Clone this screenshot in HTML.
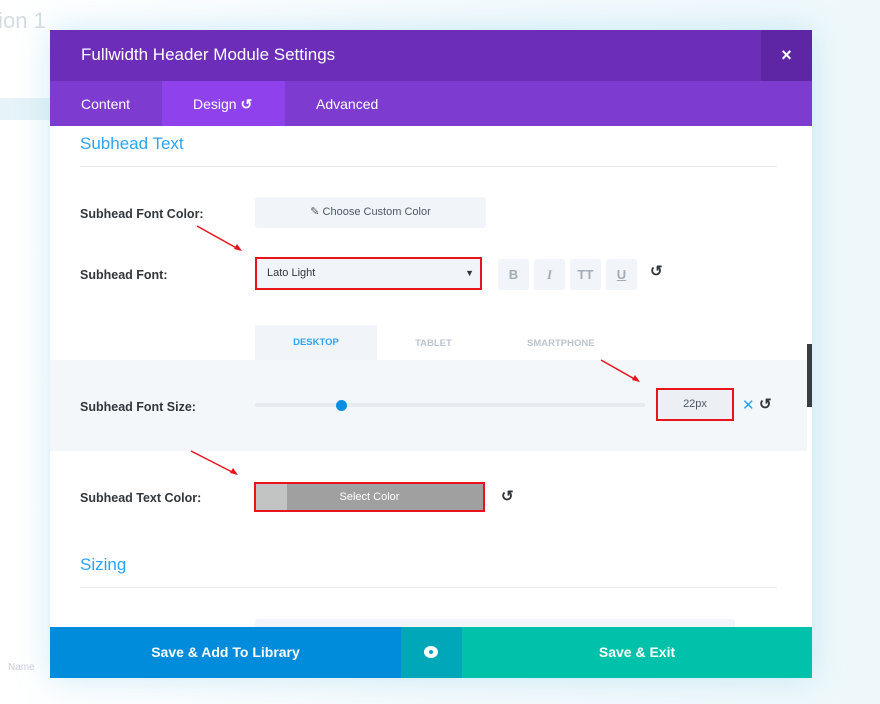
<!DOCTYPE html>
<html><head><meta charset="utf-8"><style>
*{margin:0;padding:0;box-sizing:border-box}
body{width:880px;height:704px;overflow:hidden;background:#f7fbfd;font-family:"Liberation Sans",sans-serif;position:relative}
.a{position:absolute}
.lbl{position:absolute;left:80px;font-size:12.5px;font-weight:bold;color:#32373c}
.btn{position:absolute;top:259px;width:31px;height:31px;background:#f1f5f9;border-radius:3px;color:#a3abb5;font-weight:bold;font-size:13px;text-align:center;line-height:31px}
</style></head><body>
<div class="a" style="left:0;top:0;width:880px;height:704px;background:linear-gradient(90deg,#fff 0,#f4fafd 50%,#eef8fb 100%)"></div>
<div class="a" style="left:-8px;top:8px;font-size:22px;color:#d6dde3">tion 1</div>
<div class="a" style="left:0;top:98px;width:50px;height:22px;background:#e6f3f8"></div>
<div class="a" style="left:8px;top:662px;font-size:10px;color:#ccd">Name</div>
<div class="a" style="left:50px;top:30px;width:762px;height:648px;background:#fff;box-shadow:0 0 30px rgba(120,200,230,.35)"></div>
<div class="a" style="left:50px;top:30px;width:762px;height:51px;background:#6c2eb9"></div>
<div class="a" style="left:761px;top:30px;width:51px;height:51px;background:#5e26a5;color:#fff;font-size:18px;text-align:center;line-height:51px;font-weight:bold">×</div>
<div class="a" style="left:81px;top:45px;color:#fff;font-size:17px">Fullwidth Header Module Settings</div>
<div class="a" style="left:50px;top:81px;width:762px;height:45px;background:#7e3bd0"></div>
<div class="a" style="left:162px;top:81px;width:123px;height:45px;background:#8f42ec"></div>
<div class="a" style="left:81px;top:96px;color:#fff;font-size:14px">Content</div>
<div class="a" style="left:193px;top:96px;color:#fff;font-size:14px">Design <span style="font-weight:bold">↺</span></div>
<div class="a" style="left:316px;top:96px;color:#fff;font-size:14px">Advanced</div>
<div class="a" style="left:80px;top:134px;color:#2ea3f2;font-size:17px">Subhead Text</div>
<div class="a" style="left:80px;top:166px;width:697px;height:1px;background:#eaedf0"></div>
<div class="lbl" style="top:207px">Subhead Font Color:</div>
<div class="a" style="left:255px;top:197px;width:231px;height:31px;background:#f1f5f9;border-radius:3px;font-size:11px;color:#4c5866;text-align:center;line-height:31px">✎ Choose Custom Color</div>
<div class="lbl" style="top:268px">Subhead Font:</div>
<div class="a" style="left:255px;top:257px;width:227px;height:33px;background:#f1f5f9;border:2px solid #e8141b;font-size:11px;color:#32373c;line-height:29px;padding-left:10px">Lato Light<span style="position:absolute;right:6px;font-size:9px">▼</span></div>
<div class="btn" style="left:498px">B</div>
<div class="btn" style="left:534px;font-style:italic;font-family:'Liberation Serif',serif">I</div>
<div class="btn" style="left:570px">TT</div>
<div class="btn" style="left:606px;text-decoration:underline">U</div>
<div class="a" style="left:650px;top:262px;font-size:15px;font-weight:bold;color:#32373c">↺</div>
<div class="a" style="left:255px;top:325px;width:122px;height:35px;background:#f1f5f9;color:#2ea3f2;font-size:9.5px;font-weight:bold;text-align:center;line-height:36px">DESKTOP</div>
<div class="a" style="left:415px;top:338px;color:#bcc5cf;font-size:9.5px;font-weight:bold">TABLET</div>
<div class="a" style="left:527px;top:338px;color:#bcc5cf;font-size:9.5px;font-weight:bold">SMARTPHONE</div>
<div class="a" style="left:50px;top:360px;width:757px;height:91px;background:#f4f7fa"></div>
<div class="lbl" style="top:400px">Subhead Font Size:</div>
<div class="a" style="left:255px;top:403px;width:390px;height:4px;background:#e6ebf0;border-radius:2px"></div>
<div class="a" style="left:336px;top:400px;width:11px;height:11px;background:#0c8de4;border-radius:50%"></div>
<div class="a" style="left:656px;top:388px;width:78px;height:33px;background:#ecf0f5;border:2px solid #e8141b;text-align:center;line-height:29px;font-size:11px;color:#4c5866">22px</div>
<div class="a" style="left:742px;top:396px;color:#2ea3f2;font-size:15px">✕</div>
<div class="a" style="left:759px;top:395px;font-size:15px;font-weight:bold;color:#32373c">↺</div>
<div class="a" style="left:807px;top:344px;width:5px;height:63px;background:#3a3d42"></div>
<div class="lbl" style="top:491px">Subhead Text Color:</div>
<div class="a" style="left:254px;top:482px;width:231px;height:30px;background:#a0a0a0;border:2px solid #e8141b;color:#fff;font-size:11px;text-align:center;line-height:26px">Select Color</div>
<div class="a" style="left:256px;top:484px;width:31px;height:26px;background:#c2c4c4"></div>
<div class="a" style="left:501px;top:487px;font-size:15px;font-weight:bold;color:#32373c">↺</div>
<div class="a" style="left:80px;top:555px;color:#2ea3f2;font-size:17px">Sizing</div>
<div class="a" style="left:80px;top:587px;width:697px;height:1px;background:#eaedf0"></div>
<div class="a" style="left:255px;top:619px;width:480px;height:10px;background:#f1f5f9;border-radius:3px"></div>
<div class="a" style="left:50px;top:627px;width:351px;height:51px;background:#008bdb;color:#fff;font-weight:bold;font-size:14px;text-align:center;line-height:51px">Save &amp; Add To Library</div>
<div class="a" style="left:401px;top:627px;width:61px;height:51px;background:#00a7b9"></div>
<div class="a" style="left:424px;top:646px;width:14px;height:12px;background:#fff;border-radius:50%"></div>
<div class="a" style="left:429px;top:650px;width:4px;height:4px;background:#00a7b9;border-radius:50%"></div>
<div class="a" style="left:462px;top:627px;width:350px;height:51px;background:#00c1a9;color:#fff;font-weight:bold;font-size:14px;text-align:center;line-height:51px">Save &amp; Exit</div>
<svg class="a" style="left:0;top:0" width="880" height="704"><g stroke="#e8141b" stroke-width="1.5" fill="#e8141b">
<line x1="197" y1="226" x2="240" y2="250"/><polygon points="242,251 234,249 237,244" stroke="none"/>
<line x1="601" y1="360" x2="638" y2="381"/><polygon points="640,382 632,380 635,375" stroke="none"/>
<line x1="191" y1="451" x2="236" y2="474"/><polygon points="238,475 230,473 233,468" stroke="none"/>
</g></svg>
</body></html>
